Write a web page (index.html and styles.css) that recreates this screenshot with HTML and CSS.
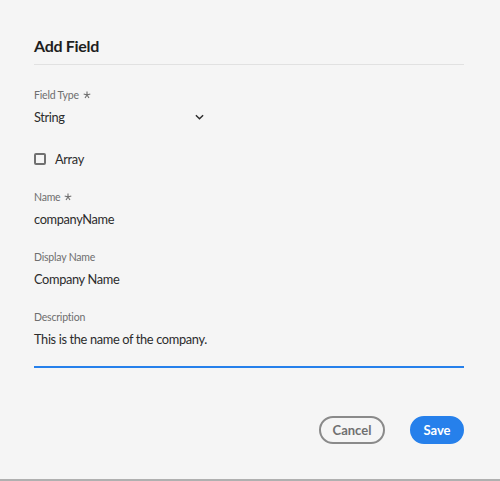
FILE: index.html
```html
<!DOCTYPE html>
<html>
<head>
<meta charset="utf-8">
<link rel="stylesheet" href="styles.css">
</head>
<body>
<div class="dialog">
  <div class="header"><h1 class="title">Add Field</h1></div>
  <div class="field first">
    <div class="label">Field Type <svg class="req" viewBox="0 0 8 8" width="8" height="8"><path d="M4 0.5V4M4 4L0.7 2.9M4 4L7.3 2.9M4 4L2 7M4 4L6 7" stroke="#6e6e6e" stroke-width="1.1" fill="none"/></svg></div>
    <div class="picker"><span class="value">String</span><svg class="chev" viewBox="0 0 10 6" width="9" height="6"><path d="M1 1L5 5L9 1" stroke="#2c2c2c" stroke-width="1.6" fill="none"/></svg></div>
  </div>
  <label class="check"><span class="box"></span><span class="check-text">Array</span></label>
  <div class="field">
    <div class="label">Name <svg class="req" viewBox="0 0 8 8" width="8" height="8"><path d="M4 0.5V4M4 4L0.7 2.9M4 4L7.3 2.9M4 4L2 7M4 4L6 7" stroke="#6e6e6e" stroke-width="1.1" fill="none"/></svg></div>
    <div class="value">companyName</div>
  </div>
  <div class="field">
    <div class="label">Display Name</div>
    <div class="value">Company Name</div>
  </div>
  <div class="field">
    <div class="label">Description</div>
    <div class="value textarea">This is the name of the company.</div>
  </div>
  <div class="footer">
    <button class="btn secondary">Cancel</button>
    <button class="btn primary">Save</button>
  </div>
</div>
</body>
</html>
```
FILE: styles.css
```css
html, body { margin: 0; padding: 0; }
body {
  background: #f5f5f5;
  font-family: Lato, "Open Sans", sans-serif;
  color: #2c2c2c;
}
.dialog {
  width: 500px;
  height: 481px;
  box-sizing: border-box;
  padding: 0 36px 0 34px;
  border-bottom: 2px solid #b0b0b0;
  display: flex;
  flex-direction: column;
}
.header {
  padding-top: 36px;
  border-bottom: 1px solid #e1e1e1;
  padding-bottom: 8px;
}
.title {
  margin: 0;
  font-size: 16px;
  line-height: 20px;
  font-weight: 700;
  letter-spacing: -0.3px;
  color: #1e1e1e;
}
.field { margin-top: 21px; display: flex; flex-direction: column; }
.field.first { margin-top: 23px; }
.label {
  font-size: 10.5px;
  line-height: 14px;
  letter-spacing: -0.2px;
  color: #6e6e6e;
  display: flex;
  align-items: center;
  gap: 4px;
  margin-bottom: 5px;
}
.req { display: block; margin-top: -1px; }
.value {
  font-size: 12.8px;
  line-height: 20px;
  letter-spacing: -0.35px;
  color: #2c2c2c;
}
.picker {
  width: 170px;
  display: flex;
  justify-content: space-between;
  align-items: center;
}
.check {
  margin-top: 22px;
  height: 20px;
  display: flex;
  align-items: center;
  gap: 9px;
}
.box {
  width: 12px;
  height: 12px;
  box-sizing: border-box;
  border: 2px solid #707070;
  border-radius: 2px;
}
.check-text { font-size: 12.8px; letter-spacing: -0.35px; color: #2c2c2c; }
.textarea {
  padding-bottom: 17px;
  border-bottom: 2px solid #2680eb;
}
.footer {
  margin-top: 48px;
  display: flex;
  justify-content: flex-end;
  gap: 25px;
}
.btn {
  height: 28px;
  border-radius: 14px;
  font-family: Lato, "Open Sans", sans-serif;
  font-size: 13px;
  font-weight: 700;
  box-sizing: border-box;
  padding: 0 10px;
  cursor: pointer;
}
.secondary {
  width: 66px;
  background: transparent;
  border: 2px solid #8a8a8a;
  color: #707070;
}
.primary {
  width: 54px;
  background: #2680eb;
  border: 2px solid #2680eb;
  color: #fff;
}
```
